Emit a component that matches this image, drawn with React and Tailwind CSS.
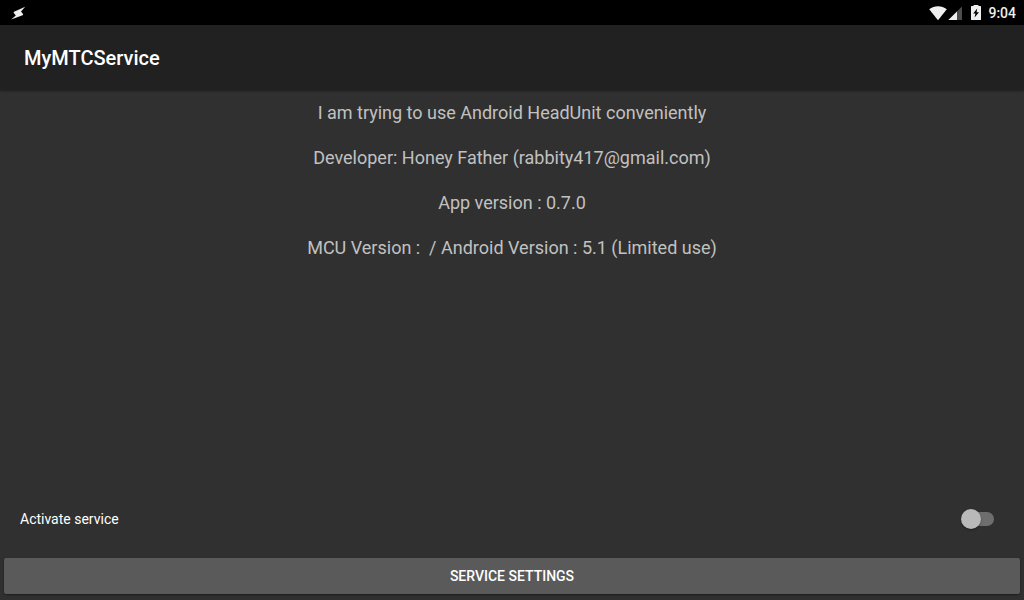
import React, { useState } from "react";

const infoLines = [
  "I am trying to use Android HeadUnit conveniently",
  "Developer: Honey Father (rabbity417@gmail.com)",
  "App version : 0.7.0",
  "MCU Version :  / Android Version : 5.1 (Limited use)",
];

function StatusBar() {
  return (
    <div className="h-[25px] shrink-0 bg-black pl-2.5 pr-2 flex items-center justify-between">
      <svg width="16" height="16" viewBox="0 0 16 16" fill="#efefef">
        <path d="M15.2 1.8 L4 6.8 Q3.3 7.3 3.8 8 L5.8 10.4 L1.2 14.6 L12.6 10.2 Q13.5 9.6 13 8.9 L11 6.4 Z" />
      </svg>
      <div className="flex items-center">
        <svg width="18" height="16" viewBox="0 0 18 16" fill="#efefef">
          <path d="M0.2 4.2 C5.2 0.1 12.8 0.1 17.8 4.2 L9 15.2 Z" />
        </svg>
        <svg width="16" height="16" viewBox="0 0 16 16">
          <path d="M15 1.4 V15 H1.4 Z" fill="#4d4d4d" />
          <path d="M10 6.4 V15 H1.4 Z" fill="#efefef" />
        </svg>
        <svg
          className="ml-2"
          width="10"
          height="16"
          viewBox="0 0 10 16"
          fill="#efefef"
        >
          <path
            fillRule="evenodd"
            d="M2.6 0 H7.4 V1 H9.4 Q10 1 10 1.6 V14.4 Q10 15 9.4 15 H0.6 Q0 15 0 14.4 V1.6 Q0 1 0.6 1 H2.6 Z M6.2 3.6 L2.2 8.6 H4.4 L3.6 12.6 L8 7.2 H5.6 Z"
          />
        </svg>
        <span className="ml-[7px] text-sm leading-6 font-medium text-[#efefef]">
          9:04
        </span>
      </div>
    </div>
  );
}

function App() {
  const [active, setActive] = useState(false);

  return (
    <div className="min-h-screen flex flex-col bg-[#303030] font-[Roboto,sans-serif]">
      <StatusBar />
      <header className="h-[65px] shrink-0 px-6 flex items-center bg-[#212121] shadow-[0_1px_2px_rgba(0,0,0,0.4)]">
        <h1 className="text-xl font-medium text-white">MyMTCService</h1>
      </header>
      <main className="flex-1 text-center text-lg text-[#c1c1c1]">
        {infoLines.map((line, index) => (
          <p className="leading-[45px] whitespace-pre-wrap" key={index}>
            {line}
          </p>
        ))}
      </main>
      <div className="h-[78px] pl-5 pr-[30px] flex items-center justify-between">
        <label htmlFor="activate" className="text-sm text-white">
          Activate service
        </label>
        <input
          id="activate"
          type="checkbox"
          role="switch"
          checked={active}
          onChange={(e) => setActive(e.target.checked)}
          className="appearance-none flex items-center w-[33px] h-5 cursor-pointer before:z-10 before:size-5 before:shrink-0 before:rounded-full before:bg-[#b9b9b9] before:shadow-[0_1px_2px_rgba(0,0,0,0.4)] after:h-3.5 after:w-7 after:shrink-0 after:-ml-[15px] after:rounded-full after:bg-[#6e6e6e] checked:flex-row-reverse checked:before:bg-teal-400 checked:after:ml-0 checked:after:-mr-[15px]"
        />
      </div>
      <button
        type="button"
        className="mx-1 mb-1.5 h-9 shrink-0 rounded-xs bg-[#5a5a5b] text-sm font-medium text-white shadow-[0_1px_2px_rgba(0,0,0,0.4)]"
      >
        SERVICE SETTINGS
      </button>
    </div>
  );
}

export default App;
